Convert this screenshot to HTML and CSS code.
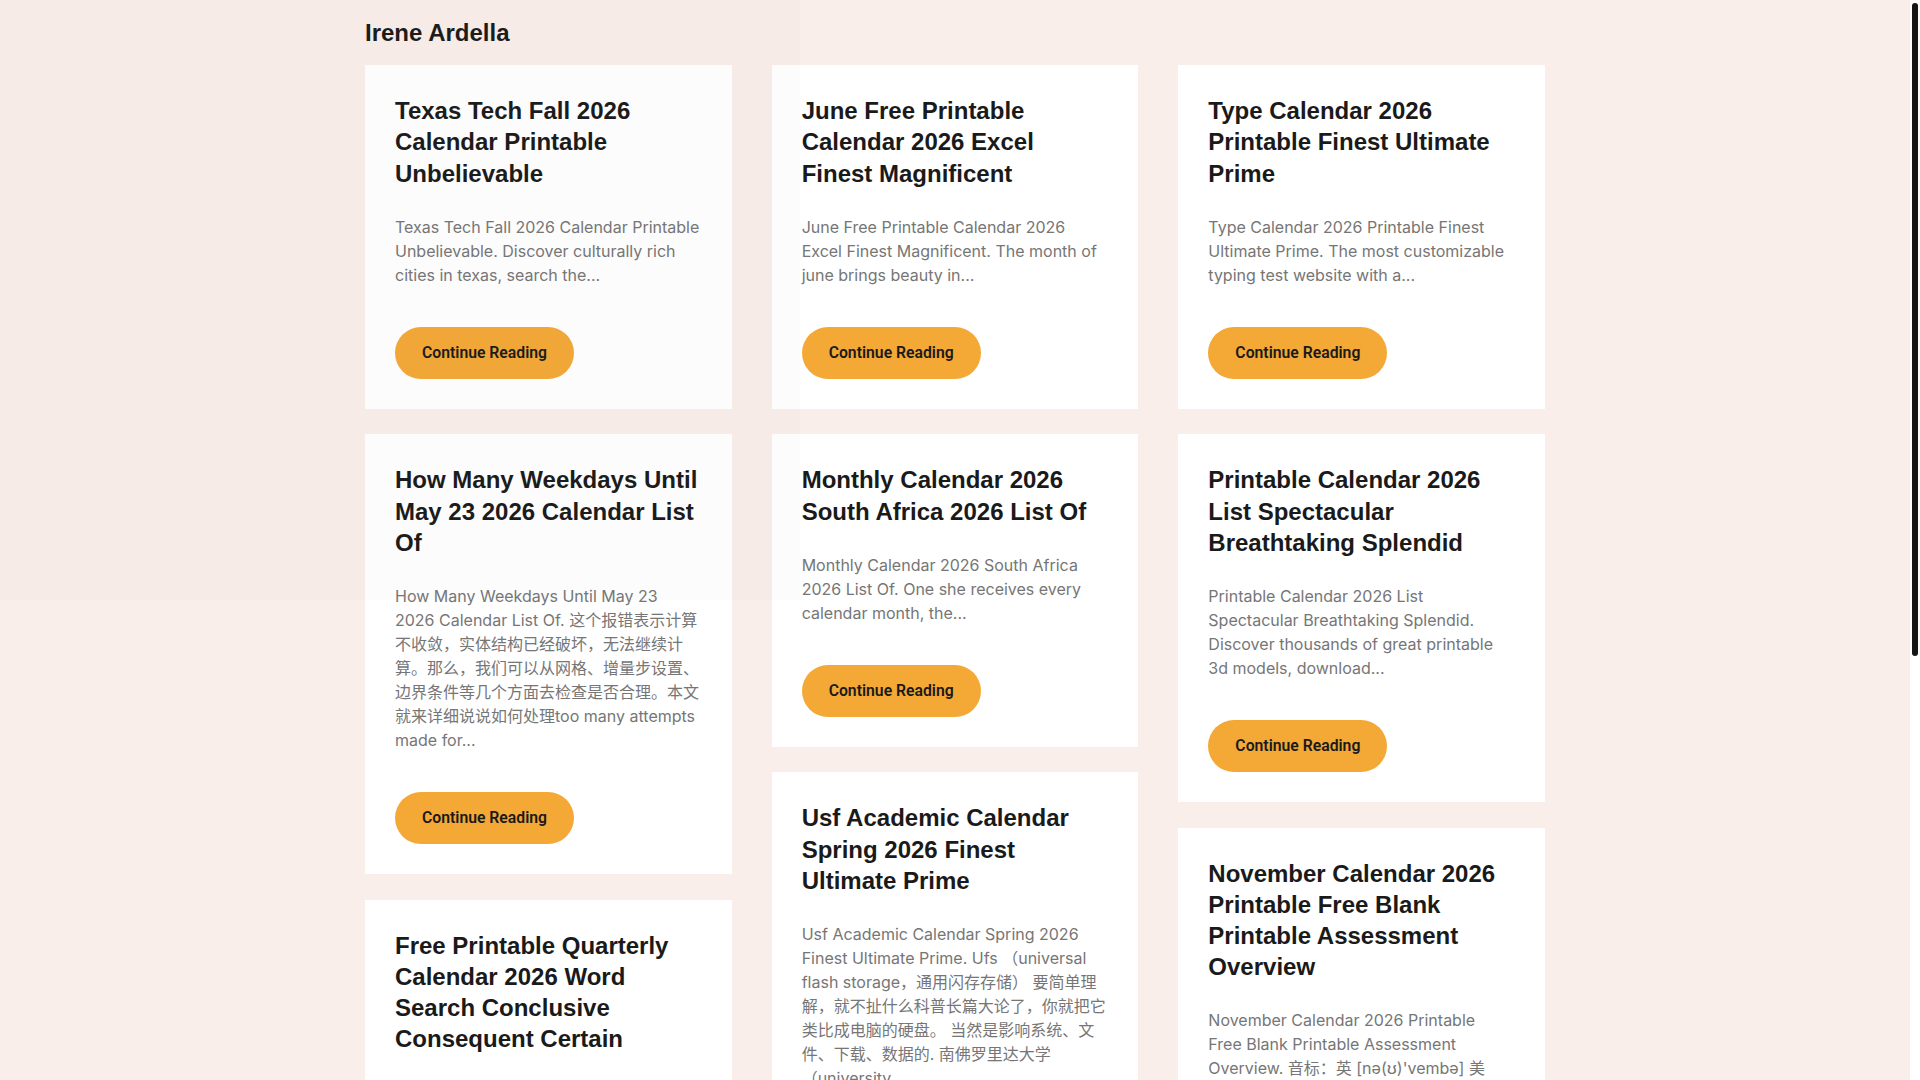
FILE: index.html
```html
<!DOCTYPE html>
<html lang="en">
<head>
<meta charset="utf-8">
<title>Irene Ardella</title>
<link rel="stylesheet" href="styles.css">
</head>
<body>
<div class="veil"></div>
<div class="scrollbar"><div class="scrollbar-thumb"></div></div>
<header class="site-header">
  <div class="container">
    <h1 class="site-title">Irene Ardella</h1>
  </div>
</header>
<main class="container">
  <div class="masonry">
    <div class="col">
      <article class="card">
        <h2 class="card-title">Texas Tech Fall 2026 Calendar Printable Unbelievable</h2>
        <p class="excerpt">Texas Tech Fall 2026 Calendar Printable Unbelievable. Discover culturally rich cities in texas, search the...</p>
        <a class="btn" href="#">Continue Reading</a>
      </article>
      <article class="card">
        <h2 class="card-title">How Many Weekdays Until May 23 2026 Calendar List Of</h2>
        <p class="excerpt">How Many Weekdays Until May 23 2026 Calendar List Of. 这个报错表示计算不收敛，实体结构已经破坏，无法继续计算。那么，我们可以从网格、增量步设置、边界条件等几个方面去检查是否合理。本文就来详细说说如何处理too many attempts made for...</p>
        <a class="btn" href="#">Continue Reading</a>
      </article>
      <article class="card">
        <h2 class="card-title">Free Printable Quarterly Calendar 2026 Word Search Conclusive Consequent Certain</h2>
        <p class="excerpt">Free Printable Quarterly Calendar 2026 Word Search Conclusive Consequent Certain. Plan each season ahead with these free quarterly...</p>
        <a class="btn" href="#">Continue Reading</a>
      </article>
    </div>
    <div class="col">
      <article class="card">
        <h2 class="card-title">June Free Printable Calendar 2026 Excel Finest Magnificent</h2>
        <p class="excerpt">June Free Printable Calendar 2026 Excel Finest Magnificent. The month of june brings beauty in...</p>
        <a class="btn" href="#">Continue Reading</a>
      </article>
      <article class="card">
        <h2 class="card-title">Monthly Calendar 2026 South Africa 2026 List Of</h2>
        <p class="excerpt">Monthly Calendar 2026 South Africa 2026 List Of. One she receives every calendar month, the...</p>
        <a class="btn" href="#">Continue Reading</a>
      </article>
      <article class="card">
        <h2 class="card-title">Usf Academic Calendar Spring 2026 Finest Ultimate Prime</h2>
        <p class="excerpt">Usf Academic Calendar Spring 2026 Finest Ultimate Prime. Ufs （universal flash storage，通用闪存存储） 要简单理解，就不扯什么科普长篇大论了，你就把它类比成电脑的硬盘。 当然是影响系统、文件、下载、数据的. 南佛罗里达大学 （university...</p>
        <a class="btn" href="#">Continue Reading</a>
      </article>
    </div>
    <div class="col">
      <article class="card">
        <h2 class="card-title">Type Calendar 2026 Printable Finest Ultimate Prime</h2>
        <p class="excerpt">Type Calendar 2026 Printable Finest Ultimate Prime. The most customizable typing test website with a...</p>
        <a class="btn" href="#">Continue Reading</a>
      </article>
      <article class="card">
        <h2 class="card-title">Printable Calendar 2026 List Spectacular Breathtaking Splendid</h2>
        <p class="excerpt">Printable Calendar 2026 List Spectacular Breathtaking Splendid. Discover thousands of great printable 3d models, download...</p>
        <a class="btn" href="#">Continue Reading</a>
      </article>
      <article class="card">
        <h2 class="card-title">November Calendar 2026 Printable Free Blank Printable Assessment Overview</h2>
        <p class="excerpt">November Calendar 2026 Printable Free&nbsp;Blank Printable Assessment Overview. 音标：英 [nə(ʊ)'vembə] 美 [no'vɛmbɚ] 十一月...</p>
        <a class="btn" href="#">Continue Reading</a>
      </article>
    </div>
  </div>
</main>
<footer class="site-footer">
  <div class="container">
    <p class="copy">© 2026 Irene Ardella</p>
  </div>
</footer>
</body>
</html>
```
FILE: styles.css
```css
html {
  background: #f9eee9;
}
body {
  margin: 0 10px 0 0;
  background: #f9eee9;
  font-family: Inter, "Noto Sans CJK SC", sans-serif;
  color: #1a1a1a;
}
.veil {
  position: absolute;
  top: 0;
  left: 0;
  width: 800px;
  height: 600px;
  background: rgba(120, 120, 120, 0.022);
  pointer-events: none;
  z-index: 5;
}
.scrollbar {
  position: fixed;
  top: 0;
  right: 0;
  width: 10px;
  height: 100vh;
  background: #ffffff;
  z-index: 10;
}
.scrollbar-thumb {
  margin: 3px 0 0 2px;
  width: 6px;
  height: 653px;
  border-radius: 3px;
  background: #151515;
}
.container {
  max-width: 1180px;
  margin: 0 auto;
}
.site-header {
  padding: 17px 0 17px;
}
.site-title {
  margin: 0;
  font-family: "Liberation Sans", Arial, sans-serif;
  font-size: 24px;
  line-height: 1.3;
  font-weight: 700;
  color: #1a1a1a;
}
.masonry {
  display: grid;
  grid-template-columns: repeat(3, 1fr);
  column-gap: 40px;
  align-items: start;
}
.col {
  display: flex;
  flex-direction: column;
  gap: 25.6px;
}
.card {
  background: #ffffff;
  padding: 30px 31.5px 30px 30px;
  display: flex;
  flex-direction: column;
  align-items: flex-start;
}
.card-title {
  margin: 0 0 26px;
  font-family: "Liberation Sans", Arial, sans-serif;
  font-size: 24px;
  line-height: 1.3;
  font-weight: 700;
  color: #1a1a1a;
}
.excerpt {
  margin: 0 0 40px;
  font-family: Inter, "Noto Sans CJK SC", sans-serif;
  font-size: 16px;
  line-height: 24px;
  color: #767676;
}
.btn {
  display: block;
  background: #f4a836;
  color: #1a1a1a;
  text-decoration: none;
  font-family: Roboto, Inter, sans-serif;
  font-weight: 600;
  font-size: 15.75px;
  line-height: 20px;
  padding: 16px 27px;
  border-radius: 26px;
}
.site-footer {
  padding: 220px 0 260px;
}
.copy {
  margin: 0;
  font-size: 14px;
  color: #767676;
}
```
